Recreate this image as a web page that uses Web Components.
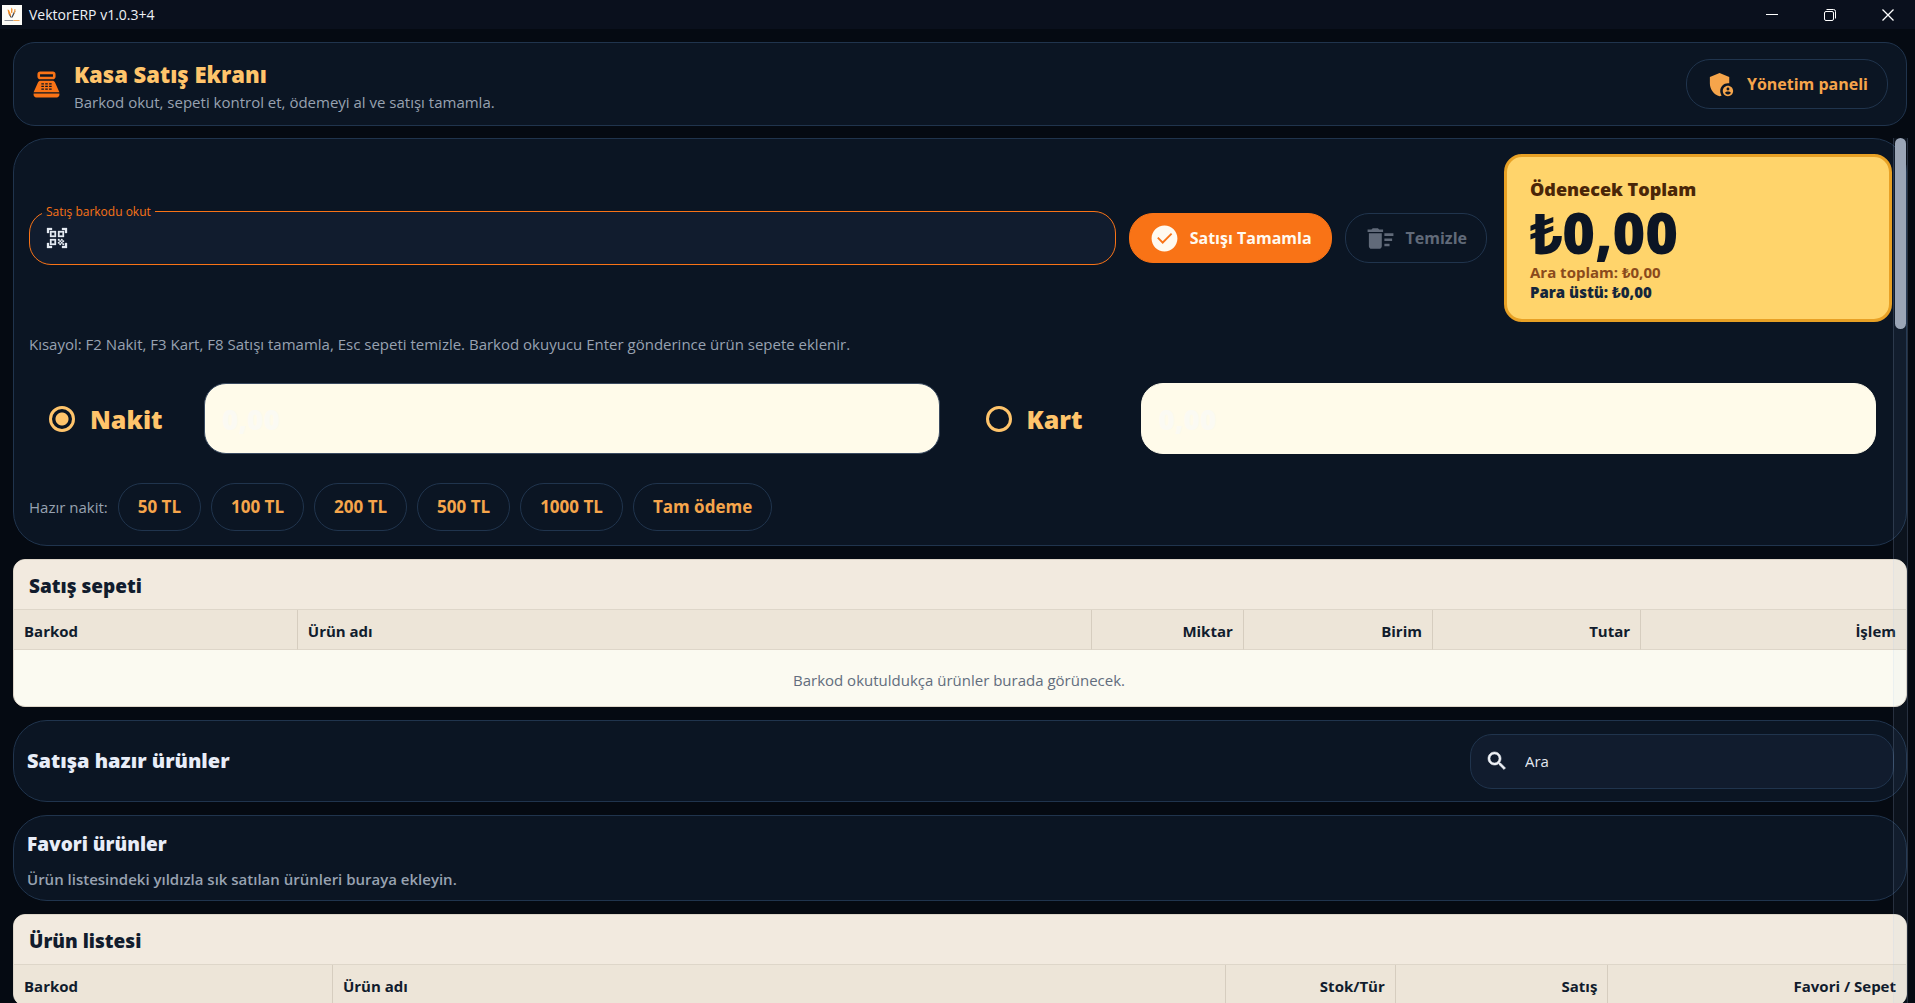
<!DOCTYPE html>
<html lang="tr">
<head>
<meta charset="utf-8">
<title>VektorERP v1.0.3+4</title>
<style>
  html, body { height: 100%; }
  body {
    margin: 0; background: #050a12; overflow: hidden;
    font-family: "Open Sans", "Noto Sans", sans-serif; font-size: 15px; line-height: 20px; color: #e8edf5;
    --panel: #0b1523; --line: #20344d; --field: #111c2e; --accent: #f97316; --amber: #ffc46b; --soft: #f6a54b; --muted: #98a2b1;
  }
</style>
</head>
<body>
<pos-app></pos-app>
<script>
const define = (name, html, setup) => {
  const tpl = document.createElement('template');
  tpl.innerHTML = html;
  customElements.define(name, class extends HTMLElement {
    constructor() {
      super();
      this.attachShadow({ mode: 'open' });
    }
    connectedCallback() {
      if (this.shadowRoot.childNodes.length) return;
      this.shadowRoot.append(tpl.content.cloneNode(true));
      if (setup) setup(this, this.shadowRoot);
    }
  });
};

const ICONS = {
  register: 'M17 2H7c-1.100 0-2 .9-2 2v2c0 1.100.9 2 2 2h10c1.100 0 2-.9 2-2V4c0-1.100-.9-2-2-2zm0 4H7V4h10v2zm3 16H4c-1.100 0-2-.9-2-2v-1h20v1c0 1.100-.9 2-2 2zM18.530 10.190C18.210 9.470 17.490 9 16.700 9H7.300c-.79 0-1.510.47-1.830 1.190L2 18h20zM8 15h2v1H8zm0-2h2v1H8zm0-2h2v1H8zm3 4h2v1h-2zm0-2h2v1h-2zm0-2h2v1h-2zm3 4h2v1h-2zm0-2h2v1h-2zm0-2h2v1h-2z',
  admin: 'M17 11c.34 0 .67.04 1 .09V6.270L10.500 3 3 6.270v4.910c0 4.540 3.200 8.790 7.500 9.820.55-.13 1.080-.32 1.600-.55C11.410 19.470 11 18.280 11 17c0-3.310 2.690-6 6-6zM17 13c-2.210 0-4 1.790-4 4s1.790 4 4 4 4-1.790 4-4-1.790-4-4-4zm0 1.380c.62 0 1.120.51 1.120 1.120s-.51 1.120-1.120 1.120-1.120-.51-1.120-1.120.5-1.120 1.120-1.120zm0 5.370c-.93 0-1.740-.46-2.240-1.170.05-.72 1.510-1.080 2.240-1.080s2.190.36 2.240 1.080c-.5.71-1.310 1.170-2.240 1.170z',
  check: 'M12 2C6.480 2 2 6.480 2 12s4.480 10 10 10 10-4.480 10-10S17.520 2 12 2zm-1.400 14.200-4.300-4.300 1-1 3.300 3.300 6.400-6.400 1 1z',
  sweep: 'M15 16h4v2h-4zm0-8h7v2h-7zm0 4h6v2h-6zM3 18c0 1.100.9 2 2 2h6c1.100 0 2-.9 2-2V8H3zM14 5h-3l-1-1H6L5 5H2v2h12z',
  scan: 'M9.500 6.500v3h-3v-3h3M11 5H5v6h6zM9.500 14.500v3h-3v-3h3M11 13H5v6h6zM17.500 6.500v3h-3v-3h3M19 5h-6v6h6zM13 13h1.500v1.500H13zM14.500 14.500H16V16h-1.500zM16 13h1.500v1.500H16zM13 16h1.500v1.500H13zM14.500 17.500H16V19h-1.500zM16 16h1.500v1.500H16zM17.500 14.500H19V16h-1.500zM17.500 17.500H19V19h-1.500zM22 7h-2V4h-3V2h5zM22 22v-5h-2v3h-3v2zM2 22h5v-2H4v-3H2zM2 2v5h2V4h3V2z',
  search: 'M15.500 14h-.79l-.28-.27C15.410 12.590 16 11.110 16 9.500 16 5.910 13.090 3 9.500 3S3 5.910 3 9.500 5.910 16 9.500 16c1.610 0 3.090-.59 4.230-1.570l.27.28v.79l5 4.990L20.490 19zm-6 0C7.010 14 5 11.990 5 9.500S7.010 5 9.500 5 14 7.010 14 9.500 11.990 14 9.500 14z'
};

define('pos-icon', `
<style>
  :host { display: block; flex: none; width: var(--size, 24px); height: var(--size, 24px); }
  svg { display: block; width: 100%; height: 100%; fill: currentColor; fill-rule: evenodd; stroke: currentColor; stroke-width: var(--bold, 0); }
</style>
<svg viewBox="0 0 24 24" aria-hidden="true"><path/></svg>`,
(el, root) => root.querySelector('path').setAttribute('d', ICONS[el.getAttribute('name')]));

define('title-bar', `
<style>
  :host { display: flex; align-items: center; height: 29px; background: #0a101d; color: #eef1f6; font: 14px/20px "Open Sans", sans-serif; }
  .logo { width: 20px; height: 20px; margin: 0 7px 0 2px; background: #fdfcf8; }
  .name { flex: 1; }
  .buttons { display: flex; margin-right: -2px; }
  button { width: 58px; height: 29px; padding: 0; border: 0; background: none; color: #fff; display: grid; place-items: center; }
  button svg { width: 14px; height: 14px; fill: none; stroke: currentColor; }
</style>
<svg class="logo" viewBox="0 0 20 20" aria-hidden="true">
  <path d="M5.500 4.500L7 5l2 4.500L9 12 6.500 9z" fill="#f08a24"/><path d="M9.300 2.500l1.200 1.500-.3 4.500-1.200-1z" fill="#f08a24"/>
  <path d="M6.500 8.500l3 3.500 3-6.500 1 1-3 6H8.500z" fill="#3b3f4a"/><path d="M12.300 4l1.500.5-1 3.500-1 1z" fill="#f0a04a"/>
  <path d="M2.500 15.500h9" stroke="#8d9098"/><path d="M11.500 15.500h6" stroke="#f3a95b"/>
</svg>
<span class="name">VektorERP v1.0.3+4</span>
<div class="buttons">
  <button aria-label="Küçült"><svg viewBox="0 0 14 14"><path d="M1 6.500h12"/></svg></button>
  <button aria-label="Önceki boyut"><svg viewBox="0 0 14 14"><rect x="1.500" y="3.500" width="9" height="9" rx="1.500"/><path d="M3.500 1.500h7a2 2 0 0 1 2 2v7"/></svg></button>
  <button aria-label="Kapat"><svg viewBox="0 0 14 14"><path d="M1.500 1.500l11 11M12.500 1.500l-11 11" stroke-width="1.300"/></svg></button>
</div>`);

define('pos-button', `
<style>
  :host { display: block; flex: none; }
  button {
    display: flex; align-items: center; justify-content: center; gap: 10px; box-sizing: border-box; height: 50px; padding: 0 19px;
    border: 1px solid var(--line); border-radius: 24px; background: none; color: var(--soft);
    font: 700 16px/24px "Open Sans", sans-serif; white-space: nowrap; --size: 31px;
  }
  :host([kind=primary]) button { background: var(--accent); border-color: var(--accent); color: #fffaf0; }
  :host([kind=disabled]) button { color: #616a79; }
  :host([kind=chip]) button { height: 48px; font-size: 17px; }
</style>
<button type="button"><slot name="icon"></slot><slot></slot></button>`,
(el, root) => { if (el.getAttribute('kind') === 'disabled') root.querySelector('button').disabled = true; });

define('pos-panel', `
<style>
  :host { display: block; box-sizing: border-box; background: var(--panel); border: 1px solid var(--line); border-radius: 34px; }
</style>
<slot></slot>`);

define('page-header', `
<style>
  :host { display: flex; align-items: center; gap: 12px; box-sizing: border-box; height: 84px; padding: 0 18px 0 17px; margin: 13px 8px 12px 13px;
    background: var(--panel); border: 1px solid var(--line); border-radius: 22px; }
  .mark { --size: 31px; color: var(--accent); }
  div { flex: 1; padding-top: 3px; }
  h1 { margin: 0; font: 800 22px/32px "Open Sans", sans-serif; color: var(--amber); }
  p { margin: 0; line-height: 24px; color: var(--muted); }
</style>
<pos-icon class="mark" name="register"></pos-icon>
<div><h1>Kasa Satış Ekranı</h1><p>Barkod okut, sepeti kontrol et, ödemeyi al ve satışı tamamla.</p></div>
<pos-button><pos-icon slot="icon" name="admin"></pos-icon>Yönetim paneli</pos-button>`);

define('barcode-field', `
<style>
  :host { display: block; flex: 1; min-width: 0; }
  fieldset { margin: -8px 0 0; padding: 0 12px; border: 1px solid var(--accent); border-radius: 22px; background: var(--field); min-width: 0; height: 62px; box-sizing: border-box; }
  legend { padding: 1px 4px 0; font-size: 12px; line-height: 16px; color: var(--accent); }
  .row { display: flex; align-items: center; gap: 12px; height: 36px; padding-left: 3px; color: #e5eaf2; --bold: .3; }
  input { flex: 1; min-width: 0; border: 0; outline: 0; background: none; color: inherit; font: 16px/24px "Open Sans", sans-serif; }
</style>
<fieldset><legend><label for="code">Satış barkodu okut</label></legend>
<div class="row"><pos-icon name="scan"></pos-icon><input id="code" type="text"></div></fieldset>`);

define('total-card', `
<style>
  :host { display: block; box-sizing: border-box; flex: 0 1 388px; height: 168px; padding: 19px 23px; border: 3px solid #e8a125; border-radius: 18px; background: #ffd46b; }
  p { margin: 0; }
  .cap { font-size: 18px; line-height: 26px; font-weight: 800; color: #4a2608; }
  .sum { font-size: 56px; line-height: 60px; font-weight: 800; color: #0c1524; }
  .sub { line-height: 20px; font-weight: 700; color: #8a4a1c; }
  .change { font-weight: 800; color: #14263c; }
</style>
<p class="cap">Ödenecek Toplam</p><p class="sum">₺0,00</p><p class="sub">Ara toplam: ₺0,00</p><p class="sub change">Para üstü: ₺0,00</p>`);

define('pay-option', `
<style>
  :host { display: flex; align-items: center; flex: 1; min-width: 0; box-sizing: border-box; padding: 0 16px 0 20px; }
  label { display: flex; align-items: center; gap: 15px; width: 155px; font: 800 25px/36px "Open Sans", sans-serif; color: var(--amber); }
  input[type=radio] { appearance: none; box-sizing: border-box; width: 26px; height: 26px; margin: 0; border: 3px solid var(--amber); border-radius: 50%; }
  input[type=radio]:checked { background: radial-gradient(circle, var(--amber) 6px, transparent 7px); }
  input[type=text] { flex: 1; min-width: 0; box-sizing: border-box; height: 71px; padding: 0 17px; border: 1px solid #fffbea; border-radius: 22px;
    background: #fffbea; color: #fbfaf3; font: 800 28px/36px "Open Sans", sans-serif; }
  :host([checked]) input[type=text] { border-color: #3a4a60; }
</style>
<label><input type="radio" name="pay"><span></span></label><input type="text" value="0,00">`,
(el, root) => {
  const name = el.getAttribute('label');
  root.querySelector('span').textContent = name;
  root.querySelector('[type=text]').setAttribute('aria-label', name);
  root.querySelector('[type=radio]').checked = el.hasAttribute('checked');
});

define('checkout-panel', `
<style>
  pos-panel { padding: 15px 14px 14px 15px; }
  .top, .pay, .cash { display: flex; align-items: center; }
  .fields { display: flex; align-items: center; flex: 1; gap: 13px; margin-right: 17px; min-width: 0; }
  .hint { margin: 12px 0 0; color: var(--muted); line-height: 20px; }
  .pay { gap: 10px; margin: 29px 0; }
  .cash { gap: 10px; color: var(--muted); }
</style>
<pos-panel>
  <div class="top">
    <div class="fields">
      <barcode-field></barcode-field>
      <pos-button kind="primary"><pos-icon slot="icon" name="check"></pos-icon>Satışı Tamamla</pos-button>
      <pos-button kind="disabled"><pos-icon slot="icon" name="sweep"></pos-icon>Temizle</pos-button>
    </div>
    <total-card></total-card>
  </div>
  <p class="hint">Kısayol: F2 Nakit, F3 Kart, F8 Satışı tamamla, Esc sepeti temizle. Barkod okuyucu Enter gönderince ürün sepete eklenir.</p>
  <div class="pay"><pay-option label="Nakit" checked></pay-option><pay-option label="Kart"></pay-option></div>
  <div class="cash"><span>Hazır nakit:</span>
    <pos-button kind="chip">50 TL</pos-button><pos-button kind="chip">100 TL</pos-button><pos-button kind="chip">200 TL</pos-button>
    <pos-button kind="chip">500 TL</pos-button><pos-button kind="chip">1000 TL</pos-button><pos-button kind="chip">Tam ödeme</pos-button>
  </div>
</pos-panel>`);

define('data-table', `
<style>
  :host { display: block; overflow: hidden; box-sizing: border-box; border: 1px solid #ded6c9; border-radius: 12px; background: #fbfaf1; color: #111c2d; }
  h2 { margin: 0; padding: 3px 15px 0; font: 800 19px/46px "Open Sans", sans-serif; background: #f2eadf; border-bottom: 1px solid #ded6c9; }
  table { width: 100%; table-layout: fixed; border-collapse: separate; border-spacing: 0; }
  th { height: 40px; padding: 3px 10px 0; text-align: right; font-size: 15px; font-weight: 700; background: #ede5d8; border-right: 1px solid #d6cdbf; border-bottom: 1px solid #ded6c9; }
  th:nth-child(-n+2) { text-align: left; }
  th:last-child { border-right: 0; }
  td { box-sizing: border-box; height: 56px; padding: 3px 16px 0 14px; text-align: center; color: #626d7d; }
</style>
<h2></h2><table><thead><tr></tr></thead><tbody></tbody></table>`,
(el, root) => {
  root.querySelector('h2').textContent = el.getAttribute('heading');
  const cols = el.getAttribute('columns').split('|').map(c => c.split(':'));
  const sum = cols.reduce((s, c) => s + Number(c[1]), 0);
  const row = root.querySelector('tr');
  for (const [text, part] of cols) {
    const th = document.createElement('th');
    th.scope = 'col';
    th.textContent = text;
    th.style.width = (part / sum * 100) + '%';
    th.style.boxSizing = 'border-box';
    row.append(th);
  }
  if (el.hasAttribute('empty')) {
    const td = root.querySelector('tbody').insertRow().insertCell();
    td.colSpan = cols.length;
    td.textContent = el.getAttribute('empty');
  }
});

define('search-panel', `
<style>
  pos-panel { display: flex; align-items: center; justify-content: space-between; height: 82px; padding: 0 12px 0 13px; }
  h2 { margin: 0; font: 800 20px/28px "Open Sans", sans-serif; color: #e8edf8; }
  label { display: flex; align-items: center; gap: 16px; box-sizing: border-box; width: 424px; height: 55px; padding: 0 14px; border: 1px solid var(--line); border-radius: 22px; background: var(--field); color: #eef1f6; --bold: .6; }
  input { flex: 1; min-width: 0; padding: 0; border: 0; background: none; color: inherit; font: 15px/24px "Open Sans", sans-serif; }
  input::placeholder { color: #e3e8f0; opacity: 1; }
</style>
<pos-panel><h2>Satışa hazır ürünler</h2><label><pos-icon name="search"></pos-icon><input type="text" placeholder="Ara" aria-label="Ara"></label></pos-panel>`);

define('favorites-panel', `
<style>
  pos-panel { height: 86px; padding: 15px 13px; }
  h2 { margin: 0; font: 800 19px/26px "Open Sans", sans-serif; color: #e8edf8; }
  p { margin: 12px 0 0; font-weight: 600; line-height: 20px; color: var(--muted); }
</style>
<pos-panel><h2>Favori ürünler</h2><p>Ürün listesindeki yıldızla sık satılan ürünleri buraya ekleyin.</p></pos-panel>`);

define('pos-app', `
<style>
  :host { display: flex; flex-direction: column; height: 100vh; overflow: hidden; }
  main { position: relative; flex: 1; min-height: 0; overflow: hidden; margin: 0 7px 0 13px; }
  .list { display: flex; flex-direction: column; gap: 13px; margin-right: 1px; }
  .track { position: absolute; top: 0; right: 0; bottom: 0; width: 15px; box-sizing: border-box; border: solid rgba(180, 205, 240, .16); border-width: 0 1px; background: rgba(160, 190, 240, .05); }
  .thumb { width: 11px; height: 191px; margin: 0 auto; border-radius: 6px; background: #9aa5b6; }
</style>
<title-bar></title-bar>
<page-header></page-header>
<main>
  <div class="list">
    <checkout-panel></checkout-panel>
    <data-table heading="Satış sepeti" columns="Barkod:15|Ürün adı:42|Miktar:8|Birim:10|Tutar:11|İşlem:14" empty="Barkod okutuldukça ürünler burada görünecek."></data-table>
    <search-panel></search-panel>
    <favorites-panel></favorites-panel>
    <data-table heading="Ürün listesi" columns="Barkod:15|Ürün adı:42|Stok/Tür:8|Satış:10|Favori / Sepet:14"></data-table>
  </div>
  <div class="track"><div class="thumb"></div></div>
</main>`);
</script>
</body>
</html>
